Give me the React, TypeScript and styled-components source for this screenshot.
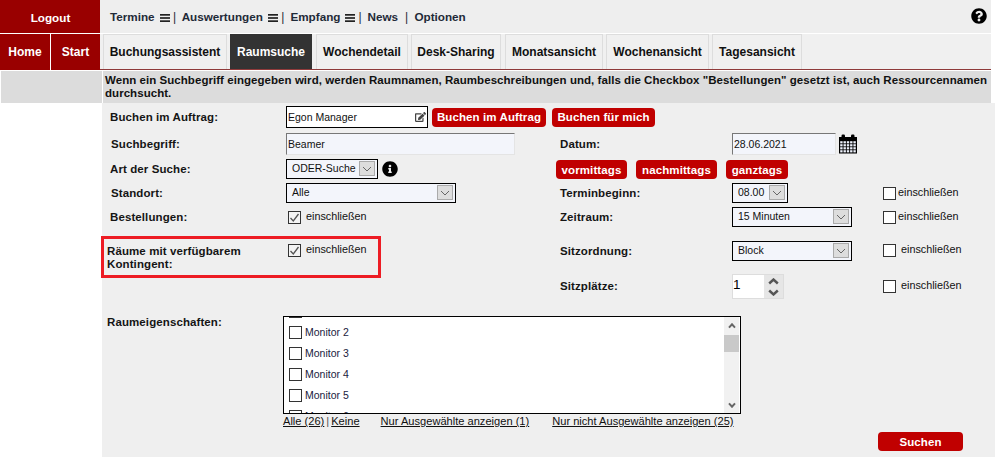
import React from "react";
import styled, { createGlobalStyle } from "styled-components";
import { FaQuestionCircle, FaInfoCircle, FaEdit } from "react-icons/fa";

const Global = createGlobalStyle`
  html, body { margin: 0; padding: 0; background: #fff; }
  body { font-family: "Liberation Sans", Arial, sans-serif; font-size: 12px; color: #111; }
  * { box-sizing: border-box; }
`;

const Page = styled.div`
  position: relative;
  width: 995px;
  height: 457px;
  overflow: hidden;
  background: #fff;
`;
const TopRow = styled.div`
  display: flex;
  height: 33px;
  margin-bottom: 1px;
  width: 991px;
`;
const Logout = styled.div`
  width: 100px;
  background: #990000;
  color: #fff;
  font-weight: bold;
  font-size: 11.7px;
  display: flex;
  align-items: center;
  justify-content: center;
  padding: 1px 0 0 1px;
`;
const TopNav = styled.nav`
  flex: 1;
  background: #eee;
  display: flex;
  align-items: center;
  padding: 0 10px;
  font-weight: bold;
  font-size: 11.7px;
  color: #1f2a38;
`;
const NavItem = styled.span`
  display: inline-flex;
  align-items: center;
`;
const Sep = styled.span<{ $l: number; $r: number }>`
  font-weight: normal;
  font-size: 12px;
  margin: 0 ${(p) => p.$r}px 0 ${(p) => p.$l}px;
`;
const HelpIcon = styled(FaQuestionCircle)`
  margin: -1px -6px 0 auto;
  width: 16px;
  height: 16px;
  color: #000;
`;
const BurgerIcon = styled.svg`
  width: 10px;
  height: 8px;
  margin: 2px 0 0 5px;
`;
const TabRow = styled.div`
  display: flex;
  height: 36px;
  width: 991px;
`;
const SideTab = styled.div<{ $w: number }>`
  width: ${(p) => p.$w}px;
  background: #990000;
  color: #fff;
  font-weight: bold;
  display: flex;
  align-items: center;
  justify-content: center;
`;
const SideGap = styled.div`
  width: 1px;
  background: #fff;
`;
const TabBar = styled.div`
  flex: 1;
  display: flex;
  gap: 3px;
  padding-left: 3px;
  background: #f0f0f0;
  border-bottom: 1px solid #8f3a3a;
`;
const Tab = styled.div<{ $w: number; $ml?: number; $active?: boolean }>`
  width: ${(p) => p.$w}px;
  margin-left: ${(p) => p.$ml ?? 0}px;
  height: 35px;
  display: flex;
  align-items: center;
  justify-content: center;
  font-weight: bold;
  color: ${(p) => (p.$active ? "#fff" : "#111")};
  background: ${(p) => (p.$active ? "#333" : "#f0f0f0")};
  border: 1px solid ${(p) => (p.$active ? "#333" : "#ddd")};
  border-bottom: none;
`;
const NoticeRow = styled.div`
  display: flex;
  margin-top: 1px;
  height: 32px;
  width: 991px;
  gap: 1px;
`;
const NoticeSide = styled.div`
  width: 101px;
  margin-left: 1px;
  background: #dcdcdc;
`;
const Notice = styled.div`
  flex: 1;
  background: #dcdcdc;
  font-weight: bold;
  font-size: 11.5px;
  line-height: 13px;
  padding: 3px 0 0 2px;
  letter-spacing: 0.05px;
  white-space: nowrap;
`;
const Body = styled.div`
  display: flex;
  height: 354px;
`;
const Side = styled.div`
  width: 102px;
  background: #fff;
`;
const Form = styled.form`
  flex: 1;
  background: #efefef;
  padding: 3px 0 0 5px;
  display: grid;
  grid-template-columns: 179px 274px 172px 151px 1fr;
  grid-template-rows: 27px 26px 24px 24px 29px 38px 42px 100px 14px;
  align-items: start;
`;
const Label = styled.label<{ $top?: number; $indent?: number }>`
  font-weight: bold;
  font-size: 11.5px;
  line-height: 13px;
  letter-spacing: 0.1px;
  padding-top: ${(p) => p.$top ?? 4}px;
  padding-left: ${(p) => p.$indent ?? 0}px;
  color: #151515;
`;
const Cell = styled.div<{ $top?: number; $left?: number; $span?: number }>`
  display: flex;
  align-items: center;
  margin-top: ${(p) => p.$top ?? 0}px;
  margin-left: ${(p) => p.$left ?? 0}px;
  ${(p) => (p.$span ? `grid-column: span ${p.$span};` : "")}
`;
const AgentBox = styled.div`
  width: 142px;
  height: 22px;
  background: #fff;
  border: 1px solid #000;
  display: flex;
  align-items: center;
  justify-content: space-between;
  padding: 0 1px;
  font-size: 10.5px;
`;
const EditIcon = styled(FaEdit)`
  width: 11px;
  height: 10px;
  color: #444;
`;
const RedButton = styled.button<{ $ml?: number; $w: number }>`
  width: ${(p) => p.$w}px;
  height: 19px;
  margin-left: ${(p) => p.$ml ?? 0}px;
  background: #c00000;
  color: #fff;
  border: none;
  border-radius: 4px;
  padding: 0;
  font: bold 11.5px "Liberation Sans", Arial, sans-serif;
  letter-spacing: 0.1px;
  flex: none;
`;
const SearchButton = styled(RedButton)`
  position: absolute;
  left: 878px;
  top: 432px;
`;
const TextField = styled.input<{ $w: number }>`
  width: ${(p) => p.$w}px;
  height: 22px;
  background: #f3f5fb;
  border: 1px solid #e4e4e4;
  border-top-color: #777;
  border-left-color: #777;
  padding: 0 1px;
  font: 10.5px "Liberation Sans", Arial, sans-serif;
  color: #111;
  outline: none;
`;
const SelectBox = styled.div<{ $w: number }>`
  width: ${(p) => p.$w}px;
  height: 20px;
  background: #f3f5fb;
  border: 1px solid #000;
  display: flex;
  align-items: flex-start;
  justify-content: space-between;
  padding: 0 2px 0 5px;
  font-size: 10.5px;
  line-height: 16px;
`;
const ArrowBox = styled.span`
  width: 16px;
  height: 15px;
  margin-top: 1px;
  background: #ddd;
  border: 1px solid #aaa;
  display: flex;
  align-items: center;
  justify-content: center;
`;
const InfoIcon = styled(FaInfoCircle)`
  width: 16px;
  height: 16px;
  margin-left: 4px;
  color: #000;
`;
const CheckWrap = styled.span<{ $on?: boolean }>`
  width: 13px;
  height: 13px;
  flex: none;
  background: ${(p) => (p.$on ? "#f4f4f4" : "#fff")};
  border: 1px solid #333;
  display: flex;
  align-items: center;
  justify-content: center;
`;
const CheckText = styled.span<{ $gap: number }>`
  margin-left: ${(p) => p.$gap}px;
  font-size: 10.8px;
  line-height: 12px;
  margin-top: -3px;
`;
const CalIcon = styled.svg`
  width: 20px;
  height: 20px;
  margin-left: 2px;
`;
const Spinner = styled.div`
  width: 52px;
  height: 25px;
  display: flex;
  border: 1px solid #ddd;
  background: #fff;
  color: #000;
  font-size: 13.5px;
  line-height: 20px;
  justify-content: space-between;
`;
const SpinButtons = styled.span`
  width: 19px;
  background: #e6e6e6;
  display: flex;
  flex-direction: column;
  align-items: center;
  justify-content: center;
  gap: 4px;
`;
const ListBox = styled.div`
  width: 458px;
  height: 98px;
  border: 1px solid #000;
  background: #fff;
  display: flex;
  overflow: hidden;
  margin-left: -3px;
`;
const ListViewport = styled.div`
  flex: 1;
  overflow: hidden;
`;
const ListInner = styled.div`
  margin-top: -16px;
`;
const ListRow = styled.div`
  height: 21px;
  display: flex;
  align-items: center;
  padding-left: 5px;
  font-size: 10.5px;
  color: #1a2140;
  gap: 3px;
`;
const ListText = styled.span`
  margin-top: -2px;
`;
const ScrollBar = styled.div`
  width: 15px;
  margin-right: 1px;
  background: #f1f1f1;
  display: flex;
  flex-direction: column;
  align-items: center;
  padding: 6px 0 5px;
`;
const Thumb = styled.div`
  width: 15px;
  height: 17px;
  margin-top: 6px;
  background: #c9c9c9;
`;
const ThumbSpacer = styled.div`
  flex: 1;
`;
const Links = styled.div`
  grid-column: 2 / span 3;
  margin: -1px 0 0 -3px;
  display: flex;
  font-size: 11.1px;
  line-height: 12px;
`;
const LinkText = styled.a<{ $ml?: number }>`
  margin-left: ${(p) => p.$ml ?? 0}px;
  text-decoration: underline;
  color: #111;
`;
const LinkSep = styled.span`
  margin: 0 2px;
  color: #555;
`;
const Highlight = styled.div`
  position: absolute;
  left: 101px;
  top: 236px;
  width: 280px;
  height: 42px;
  border: 3px solid #ed1c24;
  pointer-events: none;
`;

const Burger = () => (
  <BurgerIcon viewBox="0 0 10 8">
    <rect y="0" width="10" height="1.7" fill="#222" />
    <rect y="3.15" width="10" height="1.7" fill="#222" />
    <rect y="6.3" width="10" height="1.7" fill="#222" />
  </BurgerIcon>
);
const Chevron = () => (
  <svg width="10" height="6" viewBox="0 0 10 6">
    <path d="M1 1l4 4 4-4" fill="none" stroke="#666" strokeWidth="1" />
  </svg>
);
const BoldChevron = ({ up, w, h, sw, color }: { up?: boolean; w: number; h: number; sw: number; color: string }) => (
  <svg width={w} height={h} viewBox={`0 0 ${w} ${h}`}>
    <path
      d={up ? `M${sw / 2} ${h - sw / 2 - 0.3}L${w / 2} ${sw / 2 + 0.3}L${w - sw / 2} ${h - sw / 2 - 0.3}` : `M${sw / 2} ${sw / 2 + 0.3}L${w / 2} ${h - sw / 2 - 0.3}L${w - sw / 2} ${sw / 2 + 0.3}`}
      fill="none"
      stroke={color}
      strokeWidth={sw}
    />
  </svg>
);
const Check = ({ on, gap }: { on?: boolean; gap: number }) => (
  <>
    <CheckWrap $on={on}>
      {on && (
        <svg width="11" height="10" viewBox="0 0 11 10">
          <path d="M1.5 5l2.8 3L9.5 1" fill="none" stroke="#555" strokeWidth="1.3" />
        </svg>
      )}
    </CheckWrap>
    <CheckText $gap={gap}>einschließen</CheckText>
  </>
);
const Calendar = () => (
  <CalIcon viewBox="0 0 20 20">
    <rect x="1" y="3" width="18" height="16.5" fill="#000" />
    <rect x="3.5" y="0.5" width="3.5" height="5" rx="1.2" fill="#000" />
    <rect x="13" y="0.5" width="3.5" height="5" rx="1.2" fill="#000" />
    {[7.2, 10.2, 13.2, 16.2].map((y) =>
      [2.2, 5.5, 8.8, 12.1, 15.4].map((x) => (
        <rect key={`${x}-${y}`} x={x} y={y} width="2.4" height="2.2" fill="#eef2fc" />
      ))
    )}
  </CalIcon>
);

export default function App() {
  return (
    <Page>
      <Global />
      <TopRow>
        <Logout>Logout</Logout>
        <TopNav>
          <NavItem>Termine<Burger /></NavItem>
          <Sep $l={3.5} $r={5.4}>|</Sep>
          <NavItem>Auswertungen<Burger /></NavItem>
          <Sep $l={3.5} $r={6}>|</Sep>
          <NavItem>Empfang<Burger /></NavItem>
          <Sep $l={3} $r={6}>|</Sep>
          <NavItem>News</NavItem>
          <Sep $l={6.8} $r={6.4}>|</Sep>
          <NavItem>Optionen</NavItem>
          <HelpIcon />
        </TopNav>
      </TopRow>
      <TabRow>
        <SideTab $w={50}>Home</SideTab>
        <SideGap />
        <SideTab $w={49}>Start</SideTab>
        <TabBar>
          <Tab $w={124}>Buchungsassistent</Tab>
          <Tab $w={82} $active>Raumsuche</Tab>
          <Tab $w={92} $ml={1}>Wochendetail</Tab>
          <Tab $w={90}>Desk-Sharing</Tab>
          <Tab $w={98} $ml={1}>Monatsansicht</Tab>
          <Tab $w={103}>Wochenansicht</Tab>
          <Tab $w={90}>Tagesansicht</Tab>
        </TabBar>
      </TabRow>
      <NoticeRow>
        <NoticeSide />
        <Notice>
          Wenn ein Suchbegriff eingegeben wird, werden Raumnamen, Raumbeschreibungen und, falls die Checkbox "Bestellungen" gesetzt ist, auch Ressourcennamen
          <br />
          durchsucht.
        </Notice>
      </NoticeRow>
      <Body>
        <Side />
        <Form>
          <Label $top={5} $indent={3}>Buchen im Auftrag:</Label>
          <Cell $span={4}>
            <AgentBox>Egon Manager<EditIcon /></AgentBox>
            <RedButton type="button" $ml={4} $w={114}>Buchen im Auftrag</RedButton>
            <RedButton type="button" $ml={6} $w={103}>Buchen für mich</RedButton>
          </Cell>

          <Label $indent={4} $top={5}>Suchbegriff:</Label>
          <Cell><TextField $w={229} defaultValue="Beamer" /></Cell>
          <Label $top={5}>Datum:</Label>
          <Cell $span={2}>
            <TextField $w={104} defaultValue="28.06.2021" />
            <Calendar />
          </Cell>

          <Label $indent={3} $top={4}>Art der Suche:</Label>
          <Cell>
            <SelectBox $w={92}>ODER-Suche<ArrowBox><Chevron /></ArrowBox></SelectBox>
            <InfoIcon />
          </Cell>
          <Cell $span={3} $left={-4} $top={1}>
            <RedButton type="button" $w={71}>vormittags</RedButton>
            <RedButton type="button" $ml={9} $w={81}>nachmittags</RedButton>
            <RedButton type="button" $ml={9} $w={62}>ganztags</RedButton>
          </Cell>

          <Label $indent={4} $top={4}>Standort:</Label>
          <Cell><SelectBox $w={170}>Alle<ArrowBox><Chevron /></ArrowBox></SelectBox></Cell>
          <Label $top={4}>Terminbeginn:</Label>
          <Cell><SelectBox $w={56}>08.00<ArrowBox><Chevron /></ArrowBox></SelectBox></Cell>
          <Cell $top={4}><Check gap={2} /></Cell>

          <Label $indent={3} $top={4}>Bestellungen:</Label>
          <Cell $top={4} $left={2}><Check on gap={5} /></Cell>
          <Label $top={4}>Zeitraum:</Label>
          <Cell><SelectBox $w={120}>15 Minuten<ArrowBox><Chevron /></ArrowBox></SelectBox></Cell>
          <Cell $top={4}><Check gap={2} /></Cell>

          <Label $top={9}>Räume mit verfügbarem<br />Kontingent:</Label>
          <Cell $top={8} $left={2}><Check on gap={5} /></Cell>
          <Label $top={9}>Sitzordnung:</Label>
          <Cell $top={5}><SelectBox $w={120}>Block<ArrowBox><Chevron /></ArrowBox></SelectBox></Cell>
          <Cell $top={8}><Check gap={5} /></Cell>

          <span />
          <span />
          <Label $top={6}>Sitzplätze:</Label>
          <Cell>
            <Spinner>
              1
              <SpinButtons>
                <BoldChevron up w={11} h={7} sw={2.4} color="#555" />
                <BoldChevron w={11} h={7} sw={2.4} color="#555" />
              </SpinButtons>
            </Spinner>
          </Cell>
          <Cell $top={6}><Check gap={5} /></Cell>

          <Label $top={0}>Raumeigenschaften:</Label>
          <Cell $span={3}>
            <ListBox>
              <ListViewport>
                <ListInner>
                  {[1, 2, 3, 4, 5, 6].map((n) => (
                    <ListRow key={n}><CheckWrap /><ListText>Monitor {n}</ListText></ListRow>
                  ))}
                </ListInner>
              </ListViewport>
              <ScrollBar>
                <BoldChevron up w={8} h={6} sw={2} color="#666" />
                <Thumb />
                <ThumbSpacer />
                <BoldChevron w={8} h={6} sw={2} color="#666" />
              </ScrollBar>
            </ListBox>
          </Cell>
          <span />

          <span />
          <Links>
            <LinkText>Alle (26)</LinkText><LinkSep>|</LinkSep><LinkText>Keine</LinkText>
            <LinkText $ml={21}>Nur Ausgewählte anzeigen (1)</LinkText>
            <LinkText $ml={23}>Nur nicht Ausgewählte anzeigen (25)</LinkText>
          </Links>
        </Form>
      </Body>
      <SearchButton type="button" $w={85}>Suchen</SearchButton>
      <Highlight />
    </Page>
  );
}
